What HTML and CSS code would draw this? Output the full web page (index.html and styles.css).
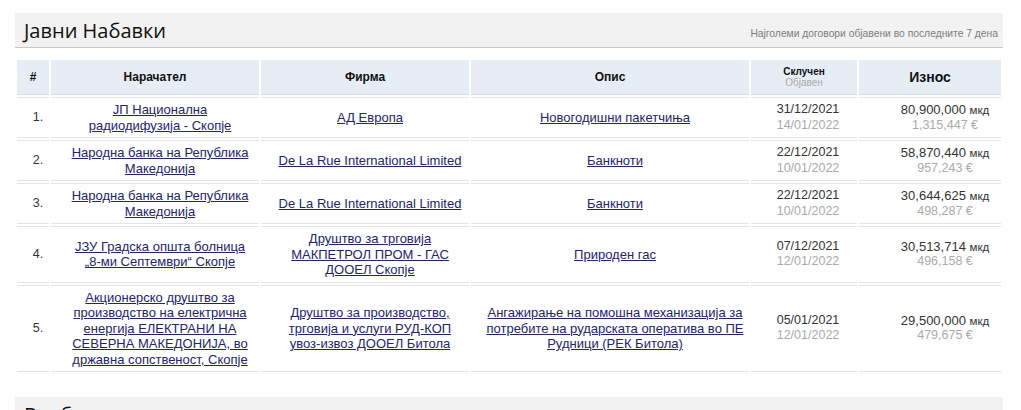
FILE: index.html
```html
<!DOCTYPE html>
<html lang="mk">
<head>
<meta charset="utf-8">
<title>Јавни Набавки</title>
<link rel="stylesheet" href="styles.css">
</head>
<body>
<div class="page">
  <section class="panel">
    <div class="panel-head">
      <h2 class="panel-title">Јавни Набавки</h2>
      <span class="panel-note">Најголеми договори објавени во последните 7 дена</span>
    </div>
    <table class="tenders">
      <thead>
        <tr>
          <th class="c-num">#</th>
          <th class="c-buyer">Нарачател</th>
          <th class="c-firm">Фирма</th>
          <th class="c-desc">Опис</th>
          <th class="c-date"><span class="d1">Склучен</span><span class="d2">Објавен</span></th>
          <th class="c-amt">Износ</th>
        </tr>
      </thead>
      <tbody>
        <tr>
          <td class="c-num">1.</td>
          <td class="c-buyer"><a href="#">ЈП Национална радиодифузија - Скопје</a></td>
          <td class="c-firm"><a href="#">АД Европа</a></td>
          <td class="c-desc"><a href="#">Новогодишни пакетчиња</a></td>
          <td class="c-date"><span class="d1">31/12/2021</span><span class="d2">14/01/2022</span></td>
          <td class="c-amt"><span class="mkd">80,900,000 <small>мкд</small></span><span class="eur">1,315,447 €</span></td>
        </tr>
        <tr>
          <td class="c-num">2.</td>
          <td class="c-buyer"><a href="#">Народна банка на Република Македонија</a></td>
          <td class="c-firm"><a href="#">De La Rue International Limited</a></td>
          <td class="c-desc"><a href="#">Банкноти</a></td>
          <td class="c-date"><span class="d1">22/12/2021</span><span class="d2">10/01/2022</span></td>
          <td class="c-amt"><span class="mkd">58,870,440 <small>мкд</small></span><span class="eur">957,243 €</span></td>
        </tr>
        <tr>
          <td class="c-num">3.</td>
          <td class="c-buyer"><a href="#">Народна банка на Република Македонија</a></td>
          <td class="c-firm"><a href="#">De La Rue International Limited</a></td>
          <td class="c-desc"><a href="#">Банкноти</a></td>
          <td class="c-date"><span class="d1">22/12/2021</span><span class="d2">10/01/2022</span></td>
          <td class="c-amt"><span class="mkd">30,644,625 <small>мкд</small></span><span class="eur">498,287 €</span></td>
        </tr>
        <tr>
          <td class="c-num">4.</td>
          <td class="c-buyer"><a href="#">ЈЗУ Градска општа болница <span class="nw">„8-ми</span> Септември“ Скопје</a></td>
          <td class="c-firm"><a href="#">Друштво за трговија МАКПЕТРОЛ ПРОМ - ГАС ДООЕЛ Скопје</a></td>
          <td class="c-desc"><a href="#">Природен гас</a></td>
          <td class="c-date"><span class="d1">07/12/2021</span><span class="d2">12/01/2022</span></td>
          <td class="c-amt"><span class="mkd">30,513,714 <small>мкд</small></span><span class="eur">496,158 €</span></td>
        </tr>
        <tr>
          <td class="c-num">5.</td>
          <td class="c-buyer"><a href="#">Акционерско друштво за производство на електрична енергија ЕЛЕКТРАНИ НА СЕВЕРНА МАКЕДОНИЈА, во државна сопственост, Скопје</a></td>
          <td class="c-firm"><a href="#">Друштво за производство, трговија и услуги РУД-КОП увоз-извоз ДООЕЛ Битола</a></td>
          <td class="c-desc"><a href="#">Ангажирање на помошна механизација за потребите на рударската оператива во ПЕ Рудници (РЕК Битола)</a></td>
          <td class="c-date"><span class="d1">05/01/2021</span><span class="d2">12/01/2022</span></td>
          <td class="c-amt"><span class="mkd">29,500,000 <small>мкд</small></span><span class="eur">479,675 €</span></td>
        </tr>
      </tbody>
    </table>
  </section>
  <section class="panel">
    <div class="panel-head">
      <h2 class="panel-title">Вработувања</h2>
    </div>
  </section>
</div>
</body>
</html>
```

FILE: styles.css
```css
html, body {
  margin: 0;
  padding: 0;
  background: #fff;
}
body {
  font-family: "Liberation Sans", Arial, sans-serif;
  font-size: 13px;
  color: #333;
}
.page {
  width: 988px;
  padding: 13px 0 0 15px;
  display: flex;
  flex-direction: column;
  gap: 23px;
}
.panel-head {
  display: flex;
  justify-content: space-between;
  align-items: center;
  background: #f2f2f2;
  border-bottom: 1px solid #c8c8c8;
  height: 34px;
  padding: 0 5px 0 9px;
  box-sizing: content-box;
}
.panel-title {
  margin: 0;
  font-family: "Open Sans", "Noto Sans", sans-serif;
  font-weight: 400;
  font-size: 20px;
  line-height: 35px;
  color: #111;
}
.panel-note {
  font-size: 10.3px;
  color: #7d7d7d;
  margin-top: 6px;
}
.tenders {
  width: 988px;
  margin-top: 10px;
  border-collapse: separate;
  border-spacing: 2px;
  table-layout: fixed;
}
.tenders th {
  background: #e7edf5;
  border-bottom: 1px solid #d9e0ea;
  height: 34px;
  padding: 0;
  font-weight: bold;
  font-size: 12px;
  color: #111;
  text-align: center;
  vertical-align: middle;
}
.tenders td {
  border-top: 1px solid #e4e4e4;
  border-bottom: 1px solid #e4e4e4;
  padding: 4px 4px;
  line-height: 15.5px;
  text-align: center;
  vertical-align: middle;
}
.tenders a {
  color: #23236f;
  text-decoration: underline;
}
.nw { white-space: nowrap; }
.c-num { width: 32px; }
.tenders td.c-num { padding-left: 10px; padding-right: 0; color: #333; font-size: 12.5px; }
.c-buyer { width: 208px; }
.c-firm { width: 208px; }
.c-desc { width: 278px; }
.c-date { width: 106px; }
.c-amt { width: auto; }
.tenders td.c-buyer { padding-left: 18px; padding-right: 8px; }
.tenders td.c-firm { padding-left: 15px; padding-right: 5px; }
.tenders td.c-desc { padding-left: 12px; padding-right: 2px; }
.tenders td.c-date { padding-left: 8px; padding-right: 0; font-size: 12.5px; }
.tenders td.c-amt { padding-left: 30px; padding-right: 0; font-size: 12.5px; }
.tenders th.c-amt { font-size: 14px; }
.tenders th.c-date .d1,
.tenders th.c-date .d2 {
  display: block;
  font-size: 10px;
  line-height: 11px;
}
.tenders th.c-date .d2 {
  font-weight: normal;
  color: #aaa;
}
.tenders td .d1,
.tenders td .d2,
.tenders td .mkd,
.tenders td .eur {
  display: block;
  height: 15.5px;
}
.tenders td .mkd { font-size: 13px; }
.tenders td .d1, .tenders td .mkd { color: #333; }
.tenders td .d2, .tenders td .eur { color: #aaa; }
.mkd small { font-size: 11.5px; line-height: 10px; }
```
